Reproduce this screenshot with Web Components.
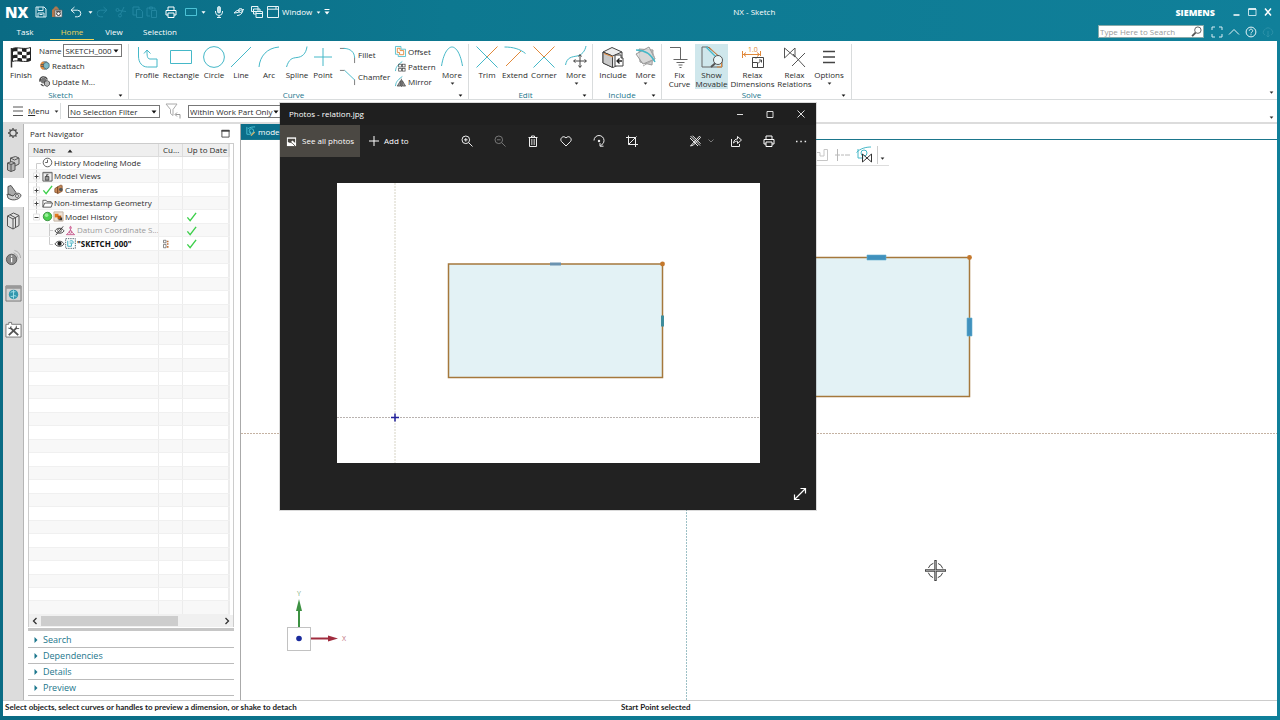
<!DOCTYPE html>
<html lang="en">
<head>
<meta charset="utf-8">
<title>NX - Sketch</title>
<style>
  html, body { margin: 0; height: 100%; }
  body { font: 8px/12px "Open Sans", "Noto Sans", sans-serif; color: #2b2b2b; overflow: hidden;
    --teal: #0f7a94; --curve: #45b8c8; --orange: #e0883a; --line: #d9dcdd; --link: #1b768c; }
</style>
</head>
<body>
<nx-app></nx-app>
<script>
const ICONS = {
  caret: ['0 0 6 4', '<path d="M0.5 0.5h5L3 3.5z" fill="currentColor"/>'],
  save: ['0 0 12 12', '<path d="M1 1h8l2 2v8H1zM3 1v3.5h5V1M3 11V7h6v4M4.5 8.5h3" fill="none" stroke="#d8edf3"/>'],
  savefin: ['0 0 12 12', '<path d="M1 4l2-2 1-1.5h2L7 2l1 1v8H1z" fill="#b0784e"/><path d="M4 4h7v7H4z" fill="#f4f4f4" stroke="#58656a" stroke-width=".8"/><circle cx="7.5" cy="7.6" r="1.9" fill="none" stroke="#333"/><path d="M5 5.2h5" stroke="#333"/>'],
  undo: ['0 0 12 12', '<path d="M4.5 1L1 4.2l3.500 3M1 4.200h6.500a3.300 3.300 0 0 1 0 6.600H5" fill="none" stroke="#e2f2f6"/>'],
  redo: ['0 0 12 12', '<path d="M7.500 1L11 4.200l-3.500 3M11 4.200H4.500a3.300 3.300 0 0 0 0 6.600H7" fill="none" stroke="#2286a0"/>'],
  cut: ['0 0 12 12', '<g fill="none" stroke="#2286a0"><circle cx="2.500" cy="4" r="1.500"/><circle cx="5" cy="9.500" r="1.500"/><path d="M4 4.500l7 1M5.500 8L9 1"/></g>'],
  copy: ['0 0 12 12', '<g fill="none" stroke="#2286a0"><path d="M7 3V1H1v8h3"/><path d="M4.500 3.500h4l2 2v6h-6z"/></g>'],
  paste: ['0 0 12 12', '<g fill="none" stroke="#2286a0"><path d="M4 10H1V2h8v2M3.500 1h3v2h-3z"/><path d="M5.500 4.500h5v7h-5z"/></g>'],
  print: ['0 0 12 12', '<g fill="none" stroke="currentColor"><path d="M3 4V1h6v3M3 9H1V4.500h10V9H9"/><path d="M3 7h6v4.500H3z"/></g>'],
  rectsm: ['0 0 12 12', '<path d="M.5 2.500h11v7H.5z" fill="none" stroke="#4cc3d6"/>'],
  mic: ['0 0 12 12', '<rect x="4.500" y="0.500" width="3" height="6.500" rx="1.500" fill="#bfe0e8" stroke="#e8f5f8" stroke-width=".8"/><path d="M2.500 5v1a3.500 3.500 0 0 0 7 0V5M6 9.500v2M4 11.500h4" fill="none" stroke="#e8f5f8"/>'],
  touch: ['0 0 12 12', '<g fill="none" stroke="#e8f5f8"><path d="M1 7l3-2.500 5-.5 2-.5M4 9.500c3 0 5-1.500 6-5M1 7l4-.500 1.500-1"/><circle cx="7.500" cy="4.500" r="2"/></g>'],
  cascade: ['0 0 12 12', '<g fill="#0d7890" stroke="#e8f5f8"><path d="M.5 .5h6.500v5H.5zM2.500 3h6.500v5H2.500z"/><path d="M5 5.500h6.500v6H5zM5 7.500h6.500"/></g>'],
  window: ['0 0 12 12', '<path d="M.5 .5h11v11H.5zM.5 3.200h11" fill="none" stroke="#e8f5f8"/><path d="M8 2h2" stroke="#e8f5f8"/>'],
  overflow: ['0 0 6 6', '<path d="M.5 .5h5" stroke="#fff"/><path d="M.5 2.500h5L3 5.500z" fill="#fff"/>'],
  wmin: ['0 0 12 12', '<path d="M3.500 9h6" stroke="#fff" stroke-width="1.500"/>'],
  wmax: ['0 0 12 12', '<path d="M2.500 3h7.500v6.500H2.500z" fill="none" stroke="#bfe0e8"/><path d="M2.500 3h7.500" stroke="#fff" stroke-width="1.500"/>'],
  wclose: ['0 0 12 12', '<path d="M3 2.500l6 7M9 2.500l-6 7" stroke="#fff" stroke-width="1.500"/>'],
  lens: ['0 0 12 12', '<circle cx="7.500" cy="4.500" r="3.500" fill="none" stroke="#555"/><path d="M5 7.200L1.200 11" stroke="#555" stroke-width="2"/>'],
  full: ['0 0 12 12', '<path d="M1 4V1h3M8 1h3v3M11 8v3H8M4 11H1V8" fill="none" stroke="#d8edf3"/>'],
  up: ['0 0 12 12', '<path d="M1 8.500L6 3.500l5 5" fill="none" stroke="#e8f5f8"/>'],
  help: ['0 0 12 12', '<circle cx="6" cy="6" r="4.900" fill="none" stroke="#e8f5f8"/><path d="M4.300 4.800c0-2.200 3.400-2.200 3.400 0C7.700 6 6 6 6 7.400M6 8.300v1" fill="none" stroke="#e8f5f8"/>'],
  cloud: ['0 0 12 12', '<path d="M3 9a3 3 0 0 1 0-5.500 3.500 3.500 0 0 1 6 0A3 3 0 0 1 9 9M6 5v6M4.500 9.500L6 11l1.500-1.500" fill="none" stroke="#2c91a8"/>'],
  finish: ['0 0 22 22', '<path d="M1.500 2v19.500" stroke="#333" stroke-width="1.500"/><path d="M2.500 2.500c5-2 12 1.500 18-1v13c-6 2.500-13-1-18 1z" fill="#fff" stroke="#222"/><path d="M3 2.500c1.500-.7 3-.8 4.500-.6v3.500c-1.500-.2-3-.1-4.500.4zM12 2.300c1.500.1 3 .3 4.500.2V6c-1.500.1-3-.1-4.500-.4zM7.500 5.200c1.500 0 3 .300 4.500.500V9c-1.500-.2-3-.4-4.500-.4zM16.500 6c1.300-.1 2.600-.400 4-.8V8.500c-1.300.4-2.600.7-4 .7zM3 9.200c1.500-.5 3-.6 4.500-.5V12c-1.500-.1-3 0-4.500.5zM12 9c1.500.200 3 .400 4.500.3v3.200c-1.500.1-3-.1-4.500-.3zM7.500 12c1.500 0 3 .200 4.500.400v3c-1.500-.2-3-.4-4.500-.3zM16.500 12.500c1.300 0 2.600-.3 4-.8v2.800c-1.300.5-2.600.9-4 .9z" fill="#222"/>'],
  reattach: ['0 0 12 12', '<circle cx="6.500" cy="6" r="4.800" fill="#8a9498"/><path d="M4 1.500a5 5 0 0 0 0 9l2-1V3z" fill="#e0883a"/><path d="M5 4l3-1.500 3 1.500v4L8 10 5 8z" fill="#7fb9c6" stroke="#38606b" stroke-width=".7"/><path d="M2 5h3M2 7h3" stroke="#555"/>'],
  update: ['0 0 12 12', '<path d="M1 6a4 4 0 0 1 8-2M1 6l1-3M2 9l3 2" fill="none" stroke="#444" stroke-width="1.400"/><circle cx="5" cy="5" r="3.200" fill="#777"/><path d="M6 6l3-1 2.500 1.500v3L9 11.500 6 10z" fill="#b9b9b9" stroke="#333" stroke-width=".8"/>'],
  profile: ['0 0 22 22', '<path d="M2.500 1v9c0 7 4 11 9 11h9.500v-8h-7c-3 0-3-4-3-8.500M8 7.500L11 4l3.500 3.500" fill="none" stroke="#45b8c8"/>'],
  rectangle: ['0 0 22 22', '<path d="M.5 4.500h21v13H.5z" fill="none" stroke="#45b8c8"/>'],
  circle: ['0 0 22 22', '<circle cx="11" cy="11" r="10.400" fill="none" stroke="#45b8c8"/>'],
  line: ['0 0 22 22', '<path d="M1 21L21 1" stroke="#45b8c8"/>'],
  arc: ['0 0 22 22', '<path d="M1 21C2 10 9 2 21 1" fill="none" stroke="#45b8c8"/>'],
  spline: ['0 0 22 22', '<path d="M.5 21C3 13 6 12 11 11.500S20 8 21 .5" fill="none" stroke="#45b8c8"/>'],
  point: ['0 0 22 22', '<path d="M11 2v18M2 11h18" stroke="#45b8c8"/>'],
  fillet: ['0 0 18 18', '<path d="M1 1.500h5M16.500 11v6" stroke="#777"/><path d="M5 1.500c7 0 11.500 4 11.500 10" fill="none" stroke="#45b8c8"/>'],
  chamfer: ['0 0 18 18', '<path d="M1 1.500h5M16.500 11v6" stroke="#777"/><path d="M6 1.500l10.500 10" stroke="#45b8c8"/>'],
  offset: ['0 0 12 12', '<path d="M.5 .5h6v3h5v8h-8V9H.5z" fill="none" stroke="#45b8c8" stroke-width=".9"/><path d="M2.500 2.500h3V5h4v4.500H5V7H2.500z" fill="none" stroke="#e0883a"/>'],
  pattern: ['0 0 12 12', '<path d="M.5 11C1 7 2 5 8 .5" fill="none" stroke="#45b8c8"/><g fill="none" stroke="#444" stroke-width=".8"><rect x="4" y="3.500" width="3" height="3"/><rect x="8" y="3.500" width="3" height="3"/><rect x="4" y="8" width="3" height="3"/><rect x="8" y="8" width="3" height="3"/></g>'],
  mirror: ['0 0 12 12', '<path d="M.5 11C1 7 2 5 8 .5" fill="none" stroke="#45b8c8"/><path d="M2.500 11L6 5v6zM11.500 11L8 5v6z" fill="#999" stroke="#333" stroke-width=".7"/><path d="M7 3v9" stroke="#333" stroke-width=".8"/>'],
  conic: ['0 0 22 22', '<path d="M.5 20C3 5 8 1 11 1s8 4 10.500 19" fill="none" stroke="#45b8c8"/>'],
  trim: ['0 0 22 22', '<path d="M.5 .5l21 21M.5 21.500L11 11" stroke="#45b8c8"/><path d="M11 11L21.500 .5" stroke="#e0883a"/>'],
  extend: ['0 0 22 22', '<path d="M.5 1C9 1 16 3 21.500 7.500" fill="none" stroke="#45b8c8"/><path d="M2 20L17 5" stroke="#e0883a"/>'],
  corner: ['0 0 22 22', '<path d="M11 11L.5 21.500M11 11l10.500 10.500" stroke="#45b8c8"/><path d="M.5 .5L11 11 21.500 .5" fill="none" stroke="#e0883a"/>'],
  movecurve: ['0 0 22 22', '<path d="M.5 19C2 11 7 11 12 10S20 5 21 0" fill="none" stroke="#45b8c8"/><path d="M15 9v12M9 15h12M13.500 10.500L15 8.500l1.500 2M13.500 19.500l1.500 2 1.500-2M10.500 13.500L8.500 15l2 1.500M19.500 13.500l2 1.500-2 1.500" fill="none" stroke="#444"/>'],
  include: ['0 0 22 22', '<path d="M1 6L10 1.500 20 6v11l-9 4.500L1 17z" fill="#ececec" stroke="#444"/><path d="M10.500 10v11.500L1 17V6z" fill="#c9c9c9" stroke="#444"/><path d="M1 6l9.500 4L20 6" fill="none" stroke="#444"/><path d="M2 7.500l9 3.500" stroke="#e0883a"/><path d="M13 9h6v3h2v8h-8z" fill="#fff" stroke="#444"/><path d="M20 15h-5M17.500 12.500L15 15l2.500 2.500" fill="none" stroke="#222" stroke-width="1.300"/>'],
  sheets: ['0 0 22 22', '<path d="M4 3l14 1-1 15-12-3z" fill="#cfcfcf" stroke="#999"/><path d="M1 8L14 1l6 12L8 18z" fill="#d9d9d9" fill-opacity=".8" stroke="#999"/><path d="M8 20l12-7-3-8" fill="none" stroke="#aaa"/><path d="M1 4c8 0 15 4 19 12" fill="none" stroke="#45b8c8" stroke-width="1.500"/>'],
  fix: ['0 0 22 22', '<path d="M1 1.500h10.500V13M4.500 13.500h14M7.500 16.500h8M9.500 19h4M10.500 21.500h2" fill="none" stroke="#666"/>'],
  movable: ['0 0 22 22', '<path d="M1 1h6l14 12v8H1z" fill="none" stroke="#666"/><path d="M5 1l12 12" stroke="#45b8c8" stroke-width="1.300"/><path d="M8 1l12.500 12v8H16" fill="none" stroke="#e0883a"/><circle cx="17" cy="14" r="4.500" fill="#eaf6f8" stroke="#555"/><path d="M14 17.500L10 21" stroke="#555" stroke-width="2"/>'],
  relaxdim: ['0 0 22 22', '<text x="6" y="5.500" font-size="7" fill="#e0883a">1.0</text><path d="M.5 5v7M18.500 5v5M1 8.500h17M4 6.500L1.500 8.500l2.500 2M15 6.500l2.500 2-2.500 2" fill="none" stroke="#e0883a"/><path d="M10.500 11.500h11v10h-11zM10.500 16.500h5v5M14 11.500v1M17 14h2.500v2.500M19 14.500L16 17.500" fill="none" stroke="#444"/>'],
  relaxrel: ['0 0 22 22', '<path d="M.5 2v10L11 2v9zM21 7L8 20M9 8l12 13" fill="none" stroke="#555"/>'],
  options: ['0 0 22 22', '<path d="M5 5.500h12M5 11h12M5 16.500h12" stroke="#444" stroke-width="1.500"/>'],
  menu: ['0 0 12 12', '<path d="M1 2h10M1 6h10M1 10.500h10" stroke="#555"/>'],
  filter: ['0 0 18 16', '<path d="M1 1h11L8 6.500v6l-2.500-2V6.500z" fill="none" stroke="#aaa"/><path d="M12 9.500l-2 2 2 2M10.500 11.500H15v4" fill="none" stroke="#999"/>'],
  gear: ['0 0 12 12', '<circle cx="6" cy="6" r="3.200" fill="none" stroke="#444" stroke-width="1.200"/><path d="M6 1v1.500M6 9.500V11M1 6h1.500M9.500 6H11M2.500 2.500l1 1M8.500 8.500l1 1M9.500 2.500l-1 1M3.500 8.500l-1 1" stroke="#444" stroke-width="1.300"/>'],
  assembly: ['0 0 16 18', '<path d="M5.500 3l5-1.500 3.500 1.500v6L10 11 5.500 9z" fill="#ccc" stroke="#555"/><path d="M2.500 8l4-1.500L10 8v7l-4 1.500L2.500 15z" fill="#b5b5b5" stroke="#555"/><path d="M2.500 8L6 9.500 10 8M6 9.500v7M5.500 3l4 2 4.500-2" fill="none" stroke="#555"/>'],
  partnav: ['0 0 18 18', '<path d="M3 2.500l3-1 5 7-3 4-5-3z" fill="#aaa" stroke="#555"/><path d="M2 10l6 2c3-4 7-3 8-1 0 4-8 7-13 3z" fill="#d0d0d0" stroke="#555"/><circle cx="12" cy="12" r="1.500" fill="#fff" stroke="#666"/>'],
  reuse: ['0 0 14 18', '<path d="M1.500 4l6-3 5.500 2.500v10L7 17l-5.500-3z" fill="#e2e2e2" stroke="#555"/><path d="M1.500 4L7 7l6-3.500M7 7v10M4 2.800l5.500 3V15" fill="none" stroke="#555"/>'],
  hd3d: ['0 0 18 18', '<circle cx="7" cy="11" r="5.500" fill="#888" stroke="#555"/><path d="M7 9.500v4.500M7 7v1.300" stroke="#fff" stroke-width="1.300"/><path d="M9 4a7 7 0 0 1 5 6M10 1.500a9 9 0 0 1 6.500 8" fill="none" stroke="#aaa"/>'],
  web: ['0 0 18 18', '<path d="M1 1h16v16H1z" fill="#d3d3d3" stroke="#777"/><path d="M1 2.500h16" stroke="#999" stroke-width="3"/><circle cx="9" cy="10" r="5" fill="#3497ad"/><path d="M6 8c2-2 3 0 5-1M6 12c2 1 4-2 6 0M9 5.500v9" fill="none" stroke="#a5e0ea"/>'],
  tools: ['0 0 18 18', '<path d="M1 3.500h3V1.500h3v2h10V17H1z" fill="#fff" stroke="#777"/><path d="M5.500 7l8.500 8M12.500 7l-8.500 8" stroke="#555" stroke-width="2"/><path d="M3.500 7.500l2 .5 1-2.500M12 5v3h3" stroke="#555" fill="none"/>'],
  restore: ['0 0 10 10', '<path d="M1 1.500h8v7.500H1z" fill="none" stroke="#444"/><path d="M.5 2h9" stroke="#444" stroke-width="2"/>'],
  branch: ['0 0 12 14', '<path d="M6.500 15V7.500H11" fill="none" stroke="#ccc"/>'],
  plus: ['0 0 12 14', '<path d="M6.500 0v15" stroke="#ccc"/><path d="M3.500 4h6v6h-6z" fill="#fff" stroke="#e4e4e4"/><path d="M4.500 7.500h4M6.500 5.500v4" stroke="#444"/>'],
  minus: ['0 0 12 14', '<path d="M6.500 0v4" stroke="#ccc"/><path d="M3.500 4h6v6h-6z" fill="#fff" stroke="#e4e4e4"/><path d="M4.500 7.500h4" stroke="#444"/>'],
  child: ['0 0 24 14', '<path d="M19.500 0v15M19.500 7.500H23" fill="none" stroke="#ccc"/>'],
  last: ['0 0 24 14', '<path d="M19.500 0v7.500H23" fill="none" stroke="#ccc"/>'],
  clock: ['0 0 12 12', '<circle cx="6" cy="6" r="4.700" fill="#fff" stroke="#555"/><path d="M6 3v3H3.500" fill="none" stroke="#555"/>'],
  views: ['0 0 12 12', '<path d="M1 1.500h10v9.500H1z" fill="#eee" stroke="#555"/><path d="M1 2h10" stroke="#777"/><path d="M3.500 6h4v4h-4zM5 6V4h2" fill="#999" stroke="#333" stroke-width=".8"/>'],
  check: ['0 0 12 12', '<path d="M1.500 7l3 3.500L11 2" fill="none" stroke="#3ccf4a" stroke-width="1.500"/>'],
  camera: ['0 0 12 12', '<path d="M2 5l3-2v7l-3-1zM5 3l4-2 1 1v6L5 10.500z" fill="#c98a58" stroke="#7a4a28" stroke-width=".8"/><circle cx="8.500" cy="6" r="2" fill="#555"/>'],
  folder: ['0 0 12 12', '<path d="M1 10V2.500h3.500l1 1.500H10v1.500M1 10l2-4.500h8.500L10 10z" fill="#fff" stroke="#555"/>'],
  ball: ['0 0 12 12', '<circle cx="6" cy="6" r="4.600" fill="#4bd04f" stroke="#3a8f3f"/><circle cx="5" cy="4.500" r="2" fill="#9cf09c"/>'],
  history: ['0 0 12 12', '<path d="M1 1h10v10H1z" fill="#efe3d6" stroke="#c0b0a0"/><path d="M2 3h4v4H2z" fill="#e07a20"/><path d="M5 5h4v4H5z" fill="#b85c14"/><path d="M8 7h2v3H6V9h2z" fill="#333"/>'],
  eyeoff: ['0 0 12 12', '<path d="M1 6.500c2.500-4 7.500-4 10 0-2.500 3.500-7.500 3.500-10 0z" fill="#fff" stroke="#444"/><circle cx="6" cy="6" r="2" fill="none" stroke="#444"/><path d="M2 11L10 1.500" stroke="#333"/>'],
  eye: ['0 0 12 12', '<path d="M1 6.500c2.500-4 7.500-4 10 0-2.500 3.500-7.500 3.500-10 0z" fill="#fff" stroke="#444"/><circle cx="6" cy="6.200" r="2.300" fill="#222"/>'],
  datum: ['0 0 12 12', '<path d="M6 6V1M6 6.500L1.500 10.500M6 6.500l4.500 4M1.500 10.500h9" fill="none" stroke="#c65a8d"/><circle cx="6" cy="3" r="1.500" fill="#d77ba6"/><circle cx="6" cy="7.500" r="1.500" fill="none" stroke="#c65a8d"/>'],
  sketch: ['0 0 12 12', '<path d="M.7 .7h10.600v10.600H.7z" fill="#fff" stroke="#49606a" stroke-dasharray="1.500 1"/><path d="M3 3v6h4V6M5 3.500C7 2.500 9 3 9.500 5M5 5.500h4" fill="none" stroke="#2fa9bb"/>'],
  state: ['0 0 8 12', '<path d="M1 1.500h3v3H1zM1 6.500h3v4H1z" fill="#fff" stroke="#555" stroke-width=".8"/><path d="M5 2h2v2H5zM5 5h2v2H5zM5 8.500h2v2H5z" fill="#c0703a"/>'],
  right: ['0 0 6 8', '<path d="M1.500 1l3 3-3 3z" fill="#1b768c"/>'],
  chevl: ['0 0 6 8', '<path d="M4.500 1L1.500 4l3 3" fill="none" stroke="#333" stroke-width="1.300"/>'],
  chevr: ['0 0 6 8', '<path d="M1.500 1l3 3-3 3" fill="none" stroke="#333" stroke-width="1.300"/>'],
  sketchtab: ['0 0 12 12', '<path d="M2 1v8h4V6M3 3c3-2 6-2 8-2" fill="none" stroke="#4cc3d6"/><circle cx="7" cy="5.500" r="2.500" fill="none" stroke="#4cc3d6"/><path d="M6 10l4-4 1 1-4 4z" fill="#d9b36a"/>'],
  snap: ['0 0 14 14', '<path d="M1 4.500h3V8h4V1.500h3.500v11H1" fill="none" stroke="#c6c6c6"/>'],
  perp: ['0 0 16 14', '<path d="M2.500 1v12" stroke="#b8b8b8"/><path d="M0 7h16" stroke="#b8b8b8" stroke-dasharray="5 1 3 1"/>'],
  relation: ['0 0 16 18', '<path d="M2 3v9h6M.5 6.500C4 2.500 10 1 15 1" fill="none" stroke="#45b8c8"/><circle cx="8" cy="7" r="3" fill="none" stroke="#45b8c8"/><path d="M6.500 8v8l9-8v8z" fill="#fff" fill-opacity=".5" stroke="#333"/>'],
  photo: ['0 0 12 12', '<path d="M1 1.500h10v9.500H1z" fill="#fff"/><path d="M2 3h8v4.500L7 5 4.500 7.500 2 6.500z" fill="#4b4843"/><path d="M4 6l3 2 3 3" fill="none" stroke="#4b4843"/>'],
  add: ['0 0 12 12', '<path d="M6 1v10M1 6h10" stroke="#fff"/>'],
  zoomin: ['0 0 12 12', '<circle cx="4.800" cy="4.800" r="3.800" fill="none" stroke="#eee"/><path d="M7.600 7.600L11.500 11.500M3 4.800h3.600M4.800 3v3.600" stroke="#eee"/>'],
  zoomout: ['0 0 12 12', '<circle cx="4.800" cy="4.800" r="3.800" fill="none" stroke="#777"/><path d="M7.600 7.600L11.500 11.500M3 4.800h3.600" stroke="#777"/>'],
  trash: ['0 0 12 12', '<path d="M1.500 2.500h9M4.500 2.500v-1.500h3v1.500M2.500 2.500v9h7v-9" fill="none" stroke="#eee"/><path d="M4.500 4v6M6 4v6M7.500 4v6" fill="none" stroke="#bbb" stroke-width=".8"/>'],
  heart: ['0 0 12 12', '<path d="M6 11L1.300 6.300C-.6 3.500 3.300-.3 6 3c2.700-3.300 6.600.5 4.700 3.300z" fill="none" stroke="#eee"/>'],
  rotate: ['0 0 12 12', '<path d="M1 5.500a5 5 0 0 1 10 0C11 8 9.500 9.500 7.500 10.500M10.500 11.200H7V8" fill="none" stroke="#eee"/><circle cx="6" cy="6" r="1.200" fill="#eee"/>'],
  crop: ['0 0 12 12', '<path d="M2.500 .5v9H12M0 2.500h9.500V12M10.500 1.500l-8 8" fill="none" stroke="#eee"/>'],
  edit: ['0 0 12 12', '<path d="M1.500 1l9.500 9.500M3.500 .7l8 8M1 3l8 8M10.500 1.200L1.500 11l3-1L11.500 2.500z" fill="none" stroke="#eee"/>'],
  chevd: ['0 0 6 6', '<path d="M.5 1.500L3 4l2.500-2.500" fill="none" stroke="#777"/>'],
  share: ['0 0 12 12', '<path d="M1.500 4v7.500h8V9M3.500 8c.5-3 2-4 4-4V1.500l4 3.500-4 3.500V6.200C6 6.200 5 6.500 3.500 8z" fill="none" stroke="#eee"/>'],
  dots: ['0 0 12 12', '<path d="M1 6.500h1.500M5.300 6.500h1.500M9.600 6.500h1.500" stroke="#eee" stroke-width="1.500"/>'],
  pmin: ['0 0 8 8', '<path d="M1 4.500h6" stroke="#ddd"/>'],
  pmax: ['0 0 8 8', '<path d="M1 1.500h6V7.500H1z" fill="none" stroke="#ddd"/>'],
  pclose: ['0 0 8 8', '<path d="M.5 .5l7 7M7.500 .5l-7 7" stroke="#ddd"/>'],
  expand: ['0 0 14 14', '<path d="M2 12L12 2M7.500 1.500h5v5M1.500 7.500v5h5" fill="none" stroke="#fff" stroke-width="1.200"/>'],
};

function define(name, render) {
  customElements.define(name, class extends HTMLElement {
    connectedCallback() {
      if (this.shadowRoot) return;
      const t = document.createElement('template');
      t.innerHTML = '<style>*{box-sizing:border-box}button{font:inherit;color:inherit;background:none;border:0;padding:0;margin:0}' +
        'select,input{font:inherit;color:inherit;border-radius:0;margin:0}</style>' + render(this);
      this.attachShadow({ mode: 'open' }).append(t.content.cloneNode(true));
    }
  });
}
const a = (el, n, d = '') => el.getAttribute(n) ?? d;

/* <nx-icon name w h>: one drawing from the icon table */
define('nx-icon', el => {
  const [box, body] = ICONS[a(el, 'name')];
  const [, , w, h] = box.split(' ');
  return `<style>:host{display:inline-flex;flex:none}svg{display:block;overflow:visible}</style>
  <svg width="${a(el, 'w', w)}" height="${a(el, 'h', h)}" viewBox="${box}" aria-hidden="true">${body}</svg>`;
});
const icon = (n, w, h) => `<nx-icon name="${n}"${w ? ` w="${w}" h="${h || w}"` : ''}></nx-icon>`;

/* icon-only button, --w wide */
define('nx-button', el => `<style>
  :host{display:flex;flex:none;width:var(--w,16px);height:var(--h,16px)}
  button{flex:1;display:flex;align-items:center;justify-content:center;min-width:0}</style>
  <button aria-label="${a(el, 'label', a(el, 'icon'))}">${icon(a(el, 'icon'), a(el, 's'))}</button>`);
const btn = (i, w, label, s) => `<nx-button icon="${i}" style="--w:${w}px"${label ? ` label="${label}"` : ''}${s ? ` s="${s}"` : ''}></nx-button>`;

/* drop-down list */
define('nx-select', el => `<style>
  :host{display:flex;flex:none;gap:2px;align-items:center}
  .box{position:relative;width:var(--w)}
  select{appearance:none;width:100%;height:13px;padding:0 1px;border:1px solid #777;background:#fff;line-height:11px;display:block}
  nx-icon{position:absolute;right:3px;top:5px;color:#111;pointer-events:none}</style>
  ${a(el, 'label') ? `<label for="s">${a(el, 'label')}</label>` : ''}
  <span class="box"><select id="s" aria-label="${a(el, 'label', a(el, 'value'))}"><option>${a(el, 'value')}</option></select>${icon('caret')}</span>`);

define('nx-titlebar', () => `<style>
  :host{display:flex;align-items:center;height:24px;color:#fff;padding-right:4px}
  .logo{width:33px;padding-left:5px;font:800 15px/24px "Open Sans",sans-serif}
  .win{display:flex;align-items:center;gap:4px;padding-left:3px}
  h1{flex:1;margin:0;font-size:8px;font-weight:400;text-align:center}
  .brand{font:800 9px/12px "Open Sans",sans-serif;margin-right:13px;padding-top:2px}</style>
  <span class="logo">NX</span>
  ${btn('save', 16)}${btn('savefin', 16)}${btn('undo', 22)}${btn('caret', 6, 'undo list', 5)}${btn('redo', 18)}${btn('cut', 20)}${btn('copy', 14)}${btn('paste', 14)}
  ${btn('print', 24)}${btn('rectsm', 16, 'rectangle')}${btn('caret', 8, 'shapes', 5)}${btn('mic', 24)}${btn('touch', 16)}${btn('cascade', 20)}${btn('window', 12)}
  <button class="win">Window ${icon('caret', 5, 3)}</button>${btn('overflow', 12)}
  <h1>NX - Sketch</h1><span class="brand">SIEMENS</span>
  ${btn('wmin', 16, 'minimize')}${btn('wmax', 16, 'maximize')}${btn('wclose', 16, 'close')}`);

define('nx-tabs', () => `<style>
  :host{display:flex;align-items:flex-start;height:17px;color:#fff;padding:0 4px 0 3px}
  nav{display:flex;flex:1;height:16px}
  a{color:inherit;text-decoration:none;line-height:16px;text-align:center;width:44px}
  a.on{color:#f0d55a;box-shadow:inset 0 -1px #f0d55a;margin-left:3px}
  a.view{width:40px}
  a.wide{width:52px}
  .search{display:flex;width:106px;height:13px;margin:1px 4px 0 0;background:#fff;border:1px solid #8aa;align-items:center;padding-right:1px}
  input{flex:1;min-width:0;border:0;padding:0 1px;height:11px;background:none}
  input::placeholder{color:#999}</style>
  <nav><a href="#t">Task</a><a href="#h" class="on">Home</a><a href="#v" class="view">View</a><a href="#s" class="wide">Selection</a></nav>
  <span class="search"><input type="search" aria-label="Search" placeholder="Type Here to Search">${icon('lens', 11)}</span>
  ${btn('full', 17)}${btn('up', 17)}${btn('help', 17)}${btn('cloud', 17)}`);

/* ribbon group: tools in the slot, caption and launcher below */
define('nx-group', el => `<style>
  :host{display:flex;flex-direction:column;flex:none;width:var(--w);height:55px;margin-top:3px;border-right:1px solid var(--line)}
  .tools{display:flex;flex:1;min-height:0;padding-left:var(--pad,2px)}
  footer{display:flex;height:8px;align-items:center;padding-right:5px;color:var(--link);line-height:8px}
  footer span{flex:1;text-align:center}
  nx-icon{color:#111}</style>
  <div class="tools"><slot></slot></div><footer><span>${a(el, 'label')}</span>${icon('caret', 5, 3)}</footer>`);

/* large ribbon tool; label lines split on "|" */
define('nx-tool', el => `<style>
  :host{display:block;flex:none;width:var(--w)}
  button{display:flex;flex-direction:column;align-items:center;width:100%;height:45px;padding-top:2px;line-height:9px;white-space:nowrap}
  :host([on]) button{background:#cfe7ec}
  span{margin-top:2px}
  nx-icon + span + nx-icon{margin-top:3px}</style>
  <button>${icon(a(el, 'icon'), 22)}<span>${a(el, 'label').replace('|', '<br>')}</span>${el.hasAttribute('menu') ? icon('caret', 5, 3) : ''}</button>`);
const tool = (i, l, w, x = '') => `<nx-tool icon="${i}" label="${l}" style="--w:${w}px" ${x}></nx-tool>`;

define('nx-mini', el => `<style>
  :host{display:block}
  button{display:flex;align-items:center;gap:2px;height:var(--h,15px);white-space:nowrap}</style>
  <button>${icon(a(el, 'icon'), a(el, 's', '11'))}<span>${a(el, 'label')}</span></button>`);

define('nx-ribbon', () => `<style>
  :host{display:flex;background:#fff;height:59px;border-bottom:1px solid var(--line)}
  .stack{display:flex;flex-direction:column;flex:none}
  .form{gap:1px}
  .tall{--h:22px;width:54px;padding-left:2px}
  .ops{width:46px;padding-left:4px}
  .end{flex:1;display:flex;justify-content:flex-end;align-items:flex-end;padding:0 3px 5px}</style>
  <nx-group label="Sketch" style="--w:126px;--pad:0px">
    ${tool('finish', 'Finish', 36)}
    <div class="stack form"><nx-select label="Name" value="SKETCH_000" style="--w:59px"></nx-select>
      <nx-mini icon="reattach" label="Reattach"></nx-mini><nx-mini icon="update" label="Update M..."></nx-mini></div>
  </nx-group>
  <nx-group label="Curve" style="--w:340px">
    ${tool('profile', 'Profile', 32)}${tool('rectangle', 'Rectangle', 36)}${tool('circle', 'Circle', 30)}${tool('line', 'Line', 24)}${tool('arc', 'Arc', 32)}${tool('spline', 'Spline', 24)}${tool('point', 'Point', 28)}
    <div class="stack tall"><nx-mini icon="fillet" label="Fillet" s="17"></nx-mini><nx-mini icon="chamfer" label="Chamfer" s="17"></nx-mini></div>
    <div class="stack ops"><nx-mini icon="offset" label="Offset"></nx-mini><nx-mini icon="pattern" label="Pattern"></nx-mini><nx-mini icon="mirror" label="Mirror"></nx-mini></div>
    ${tool('conic', 'More', 30, 'menu')}
  </nx-group>
  <nx-group label="Edit" style="--w:124px">
    ${tool('trim', 'Trim', 32)}${tool('extend', 'Extend', 24)}${tool('corner', 'Corner', 34)}${tool('movecurve', 'More', 30, 'menu')}
  </nx-group>
  <nx-group label="Include" style="--w:69px">${tool('include', 'Include', 36)}${tool('sheets', 'More', 29, 'menu')}</nx-group>
  <nx-group label="Solve" style="--w:190px">
    ${tool('fix', 'Fix|Curve', 31)}${tool('movable', 'Show|Movable', 33, 'on')}${tool('relaxdim', 'Relax|Dimensions', 49)}${tool('relaxrel', 'Relax|Relations', 35)}${tool('options', 'Options', 34, 'menu')}
  </nx-group>
  <div class="end">${icon('caret', 5, 3)}</div>`);

define('nx-selectionbar', () => `<style>
  :host{display:flex;align-items:center;background:#fff;height:24px;border-bottom:2px solid #dcdcdc;padding:0 3px 0 9px}
  .menu{display:flex;align-items:center;gap:4px;width:48px}
  .rule{width:1px;height:16px;background:var(--line);margin-right:7px}
  u{text-underline-offset:1px}
  .push{margin-left:auto;padding-top:10px}</style>
  <button class="menu">${icon('menu')}<span><u>M</u>enu</span>${icon('caret', 5, 3)}</button><span class="rule"></span>
  <nx-select value="No Selection Filter" style="--w:92px"></nx-select>${btn('filter', 28)}
  <nx-select value="Within Work Part Only" style="--w:94px"></nx-select><span class="push">${icon('caret', 5, 3)}</span>`);

define('nx-rail', () => `<style>
  :host{display:flex;flex-direction:column;flex:none;width:21px;background:#dcdcdc;border-right:1px solid #b5b5b5;gap:8px;--w:20px;--h:28px}
  .gear{--h:18px}
  .on{background:#fff;width:21px;margin:-8px 0;--w:21px}</style>
  <nx-button class="gear" icon="gear"></nx-button><nx-button icon="assembly" s="18"></nx-button>
  <nx-button class="on" icon="partnav" style="--h:29px"></nx-button><nx-button icon="reuse"></nx-button>
  <nx-button icon="hd3d" s="17"></nx-button><nx-button icon="web" s="17"></nx-button><nx-button icon="tools" s="17"></nx-button>`);

const ROWS = [
  [['branch', 'clock'], 'History Modeling Mode'],
  [['plus', 'views'], 'Model Views'],
  [['plus', 'check', 'camera'], 'Cameras'],
  [['plus', 'folder'], 'Non-timestamp Geometry'],
  [['minus', 'ball', 'history'], 'Model History', '', 1],
  [['child', 'eyeoff', 'datum'], 'Datum Coordinate S...', 'dim', 1],
  [['last', 'eye', 'sketch'], '"SKETCH_000"', 'bold', 1, 1],
];
const GUIDES = ['branch', 'plus', 'minus', 'child', 'last'];
define('nx-navigator', () => `<style>
  :host{display:flex;flex-direction:column;flex:none;width:217px;background:#fff;border-right:1px solid #aaa;padding:0 6px 4px 4px}
  header{display:flex;align-items:center;justify-content:space-between;height:19px;padding:0 4px 0 2px}
  .tree{flex:1;min-height:0;border:1px solid #ccc;border-width:1px 1px 0;display:flex;flex-direction:column}
  .fit{flex:1;min-height:0;padding-right:3px;overflow:hidden}
  table{border-collapse:collapse;table-layout:fixed;width:100%;height:100%}
  th{height:12px;background:#efefef;font-weight:400;text-align:left;padding:0 0 0 4px;line-height:11px;border-right:1px solid #dcdcdc;border-bottom:1px solid #dcdcdc;white-space:nowrap}
  th nx-icon{margin-left:12px;transform:rotate(180deg)}
  td{padding:0;line-height:10px;border-right:1px solid #ececec;border-bottom:1px solid #f0f0f0;white-space:nowrap;overflow:hidden}
  tbody tr:nth-child(even){background:#f8f8f8}
  .item{display:flex;align-items:center;height:12px;padding-left:1px}
  .item span{margin-left:1px}
  .item.dim span{color:#9a9a9a}.item.bold span{font-weight:700;color:#111}
  td .mid{display:flex;padding-left:3px;height:12px;align-items:center}
  .scroll{display:flex;align-items:center;height:12px;background:#f0f0f0;padding:0 3px;gap:3px}
  .scroll i{flex:1;height:10px}.scroll i::before{content:"";display:block;width:137px;height:100%;background:#cdcdcd}
  .split{height:3px;margin:1px 0;background:#c6c6c6}
  details{border-bottom:1px solid #bbb}
  summary{display:flex;align-items:center;gap:4px;height:15px;padding-left:5px;color:var(--link);font-size:9px;list-style:none}</style>
  <header><span>Part Navigator</span>${icon('restore', 9)}</header>
  <div class="tree"><div class="fit"><table>
    <colgroup><col><col style="width:24px"><col style="width:46px"><col style="width:1px"></colgroup>
    <thead><tr><th>Name${icon('caret')}</th><th>Cu...</th><th>Up to Date</th><th style="padding:0"></th></tr></thead>
    <tbody>${Array.from({ length: 34 }, (_, i) => {
      const [ic, text, cls = '', ok, st] = ROWS[i] || [[], ''];
      return `<tr><td><div class="item ${cls}">${ic.map(n => GUIDES.includes(n) ? icon(n) : icon(n, 11)).join('')}<span>${text}</span></div></td><td>${st ? `<div class="mid">${icon('state', 8, 10)}</div>` : ''}</td><td>${ok ? `<div class="mid">${icon('check', 11)}</div>` : ''}</td><td></td></tr>`;
    }).join('')}</tbody></table></div>
    <div class="scroll">${icon('chevl')}<i></i>${icon('chevr')}</div></div>
  <div class="split"></div>
  ${['Search', 'Dependencies', 'Details', 'Preview'].map(t => `<details><summary>${icon('right')}${t}</summary></details>`).join('')}`);

define('nx-stage', () => `<style>
  :host{display:flex;flex-direction:column;flex:1;min-width:0;background:#fff}
  .tabs{height:16px;border-bottom:1px solid var(--link);flex:none}
  .tabs a{display:flex;align-items:center;gap:2px;width:120px;height:15px;padding-left:4px;background:#0b6e8a;color:#fff;text-decoration:none}
  .canvas{flex:1;position:relative;min-height:0;overflow:hidden}
  .canvas>svg{position:absolute;inset:0;width:100%;height:100%}
  .bar{position:absolute;left:300px;top:0;width:348px;height:26px;display:flex;align-items:center;justify-content:flex-end;gap:5px;padding:4px 4px 0 0;border-bottom:1px solid #ddd}
  .bar hr{width:1px;height:18px;border:0;margin:0 -3px 0 0;background:#ccc}
  .bar nx-icon:last-child{padding-top:7px}</style>
  <div class="tabs"><a href="#model">${icon('sketchtab', 11)}model1.prt</a></div>
  <div class="canvas"><svg aria-label="Sketch">
    <path d="M445.500 0V900" stroke="#9dc0c6" stroke-dasharray="2 1"/>
    <line x1="0" x2="100%" y1="293.500" y2="293.500" stroke="#c4b2a2" stroke-dasharray="2 1"/>
    <rect x="542.500" y="117.500" width="186" height="139" fill="#e3f2f5" stroke="#a5783c" stroke-width="1.500"/>
    <circle cx="728.500" cy="117.500" r="2.400" fill="#c4782c"/>
    <path d="M626 115h19v5h-19zM726 178h5v18h-5z" fill="#4091bd" stroke="#63aed2" stroke-width=".6"/>
    <g stroke="#444" fill="none"><circle cx="694.500" cy="430.500" r="7.500" stroke-dasharray="7 4.780" stroke-dashoffset="-2.400"/>
    <path d="M694.500 420v21M684 430.500h21" stroke-width="2.400"/><path d="M694.500 421v19M685 430.500h19" stroke="#ccc" stroke-width=".6"/></g></svg>
    <div class="bar">${icon('snap')}${icon('perp')}${icon('relation')}<hr>${icon('caret', 5, 3)}</div></div>`);

/* axis triad in the corner of the drawing area */
define('nx-triad', () => `<style>:host{display:block}svg{display:block;font-size:7px}</style>
  <svg width="68" height="62" viewBox="0 0 68 62" aria-label="Axes">
  <text x="16" y="7" fill="#7fae7f" text-anchor="middle">Y</text>
  <path d="M16 38V20" stroke="#3d9142" stroke-width="2"/><path d="M16 10l3 12h-6z" fill="#3d9142"/>
  <path d="M28 49.500h20" stroke="#a02c3e" stroke-width="2"/><path d="M55 49.500l-10-3v6z" fill="#a02c3e"/>
  <rect x="4.500" y="38.500" width="23" height="23" fill="#fff" stroke="#c2c2c2"/><circle cx="16" cy="49.500" r="2.800" fill="#1a2a9c"/>
  <text x="59" y="52" fill="#c0707c">X</text></svg>`);

define('nx-photo', () => `<style>
  :host{display:flex;flex-direction:column;background:#222;color:#fff;box-shadow:0 0 0 1px #4443}
  header{display:flex;align-items:center;height:22px;background:#1f1f1f;padding-left:9px}
  header span{flex:1}
  .bar{display:flex;align-items:center;height:32px}
  .all{display:flex;align-items:center;gap:5px;width:80px;height:32px;padding-left:6px;background:#4b4843;white-space:nowrap}
  .to{display:flex;align-items:center;gap:4px;padding-left:8px;width:90px;white-space:nowrap}
  .gap{flex:1}
  figure{margin:0;padding:26px 56px 47px 57px;position:relative}
  figure>svg{display:block;width:100%;background:#fff}
  .exp{position:absolute;right:8px;bottom:8px}</style>
  <header><span>Photos - relation.jpg</span>${btn('pmin', 31, 'minimize')}${btn('pmax', 30, 'maximize')}${btn('pclose', 31, 'close')}</header>
  <div class="bar"><button class="all">${icon('photo', 11)}See all photos</button><button class="to">${icon('add')}Add to</button>
  ${btn('zoomin', 33)}${btn('zoomout', 33)}${btn('trash', 33)}${btn('heart', 33)}${btn('rotate', 33)}${btn('crop', 33)}<span class="gap"></span>
  ${btn('edit', 16)}${btn('chevd', 16, 'edit menu')}${btn('share', 33)}${btn('print', 33)}${btn('dots', 31)}</div>
  <figure><svg viewBox="0 0 423 280" aria-label="relation.jpg">
    <path d="M58 0v280" stroke="#d6d3c4" stroke-dasharray="2 1"/><path d="M0 234.500h423" stroke="#b9b3b0" stroke-dasharray="2 1"/>
    <rect x="111.500" y="81" width="214" height="113.500" fill="#e3f2f5" stroke="#a5783c" stroke-width="1.500"/>
    <circle cx="325.500" cy="81" r="2.400" fill="#c4782c"/><path d="M213 79.500h11v3h-11z" fill="#6b93b0"/><path d="M324 132.500h3v11h-3z" fill="#3f8d9c"/>
    <path d="M58 230.500v8M54 234.500h8" stroke="#22229c" stroke-width="1.500"/></svg>
    <nx-button class="exp" icon="expand"></nx-button></figure>`);

define('nx-status', () => `<style>
  :host{display:flex;height:16px;background:#fff;border-top:1px solid #ccc;font:700 8px/13px Lato,"Open Sans",sans-serif;color:#1c1c1c}
  span{flex:1;padding-left:2px}span+span{flex:1.065;padding:0}</style>
  <span>Select objects, select curves or handles to preview a dimension, or shake to detach</span><span>Start Point selected</span>`);

define('nx-app', () => `<style>
  :host{display:flex;flex-direction:column;height:100vh;position:relative;background:linear-gradient(90deg,#0a6b84,#0d7890 35%,#10809a)}
  .frame{flex:1;min-height:0;display:flex;flex-direction:column;margin:0 3px 4px}
  main{flex:1;min-height:0;display:flex}
  nx-photo{position:absolute;left:280px;top:103px;width:536px}
  nx-triad{position:absolute;left:283px;bottom:69px}</style>
  <nx-titlebar></nx-titlebar><nx-tabs></nx-tabs>
  <div class="frame"><nx-ribbon></nx-ribbon><nx-selectionbar></nx-selectionbar>
  <main><nx-rail></nx-rail><nx-navigator></nx-navigator><nx-stage></nx-stage></main>
  <nx-status></nx-status></div><nx-triad></nx-triad><nx-photo></nx-photo>`);
</script>
</body>
</html>
